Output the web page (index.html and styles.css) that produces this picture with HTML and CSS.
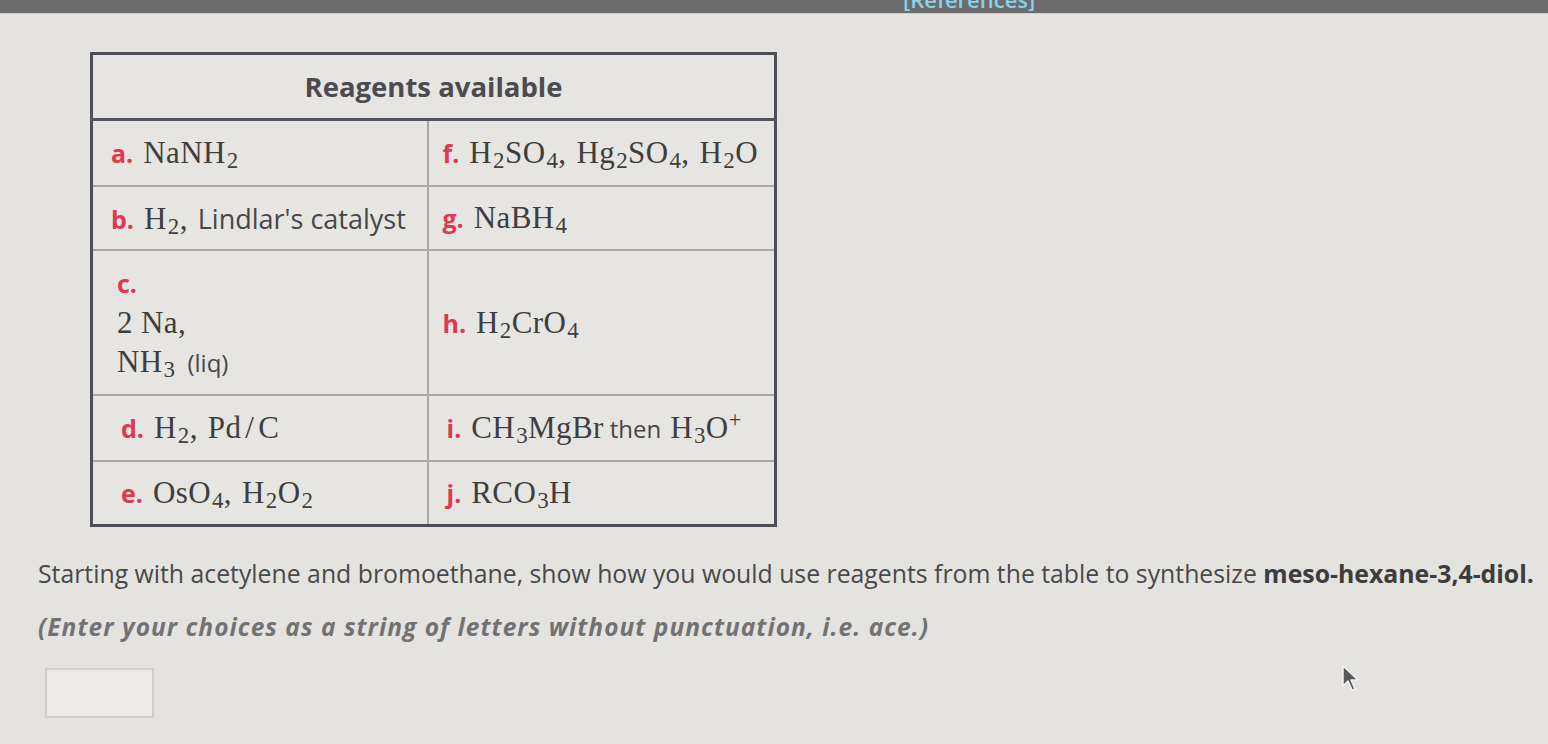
FILE: index.html
```html
<!DOCTYPE html>
<html>
<head>
<meta charset="utf-8">
<link rel="stylesheet" href="styles.css">
</head>
<body>
<div class="topbar"><span class="refs">[References]</span></div>
<main class="page">
  <table class="reagents">
    <colgroup><col class="col1"><col class="col2"></colgroup>
    <thead>
      <tr><th colspan="2">Reagents available</th></tr>
    </thead>
    <tbody>
      <tr class="r1">
        <td class="c1"><span class="lbl">a.</span><span class="chem">NaNH<sub>2</sub></span></td>
        <td class="c2"><span class="lbl">f.</span><span class="chem">H<sub>2</sub>SO<sub>4</sub><span class="cm">,</span>Hg<sub>2</sub>SO<sub>4</sub><span class="cm">,</span>H<sub>2</sub>O</span></td>
      </tr>
      <tr class="r2">
        <td class="c1"><span class="lbl">b.</span><span class="chem">H<sub>2</sub><span class="cm">,</span></span><span class="txt">Lindlar's catalyst</span></td>
        <td class="c2"><span class="lbl">g.</span><span class="chem">NaBH<sub>4</sub></span></td>
      </tr>
      <tr class="r3">
        <td class="c1 stack">
          <div class="line"><span class="lbl">c.</span></div>
          <div class="line"><span class="chem">2 Na,</span></div>
          <div class="line"><span class="chem">NH<sub>3</sub></span><span class="txt small liq">(liq)</span></div>
        </td>
        <td class="c2"><span class="lbl">h.</span><span class="chem">H<sub>2</sub>CrO<sub>4</sub></span></td>
      </tr>
      <tr class="r4">
        <td class="c1"><span class="lbl">d.</span><span class="chem">H<sub>2</sub><span class="cm">,</span>Pd<span class="sl">/</span>C</span></td>
        <td class="c2"><span class="lbl">i.</span><span class="chem">CH<sub>3</sub>MgBr</span><span class="txt small then">then</span><span class="chem">H<sub>3</sub>O<sup>+</sup></span></td>
      </tr>
      <tr class="r5">
        <td class="c1"><span class="lbl">e.</span><span class="chem">OsO<sub>4</sub><span class="cm">,</span>H<sub>2</sub>O<sub>2</sub></span></td>
        <td class="c2"><span class="lbl">j.</span><span class="chem">RCO<sub>3</sub>H</span></td>
      </tr>
    </tbody>
  </table>

  <p class="question">Starting with acetylene and bromoethane, show how you would use reagents from the table to synthesize <b>meso-hexane-3,4-diol.</b></p>
  <p class="hint">(Enter your choices as a string of letters without punctuation, i.e. ace.)</p>
  <div class="answer"></div>
</main>
<svg class="cursor" width="22" height="30" viewBox="0 0 22 30">
  <path d="M3 2 L3 22 L8 17 L12 26 L15 25 L11 16 L18 16 Z" fill="#5a5a5a" stroke="#f2f2f2" stroke-width="1.5" stroke-linejoin="round"/>
</svg>
</body>
</html>
```

FILE: styles.css
```css
html, body {
  margin: 0;
  padding: 0;
}
body {
  background: #e4e3df;
  width: 1548px;
  height: 744px;
  overflow: hidden;
  position: relative;
  font-family: "Open Sans", "Liberation Sans", sans-serif;
  color: #4a4a4a;
}
.topbar {
  height: 13px;
  background: #6d6c6c;
  overflow: hidden;
  padding-left: 903px;
  border-bottom: 1px solid #d2d1cd;
}
.refs {
  display: block;
  font-size: 22px;
  font-weight: 600;
  color: #86d3ea;
  line-height: 22px;
  margin-top: -12px;
}
.page {
  padding: 38px 0 0 38px;
}
.reagents {
  margin-left: 52px;
  width: 687px;
  table-layout: fixed;
  border-collapse: collapse;
  border: 3px solid #4f4d56;
  background: #e6e5e1;
}
.col1 { width: 336px; }
.reagents th {
  height: 63px;
  font-size: 27.5px;
  font-weight: 700;
  color: #4c4b50;
  text-align: center;
  border-bottom: 3px solid #55535c;
  padding: 0;
}
.reagents td {
  border: 2px solid #a9a8a6;
  padding: 0 0 0 18px;
  vertical-align: middle;
  white-space: nowrap;
  overflow: visible;
}
.reagents td.c2 { padding-left: 14px; }
.r1 td { height: 64px; }
.r2 td { height: 62px; }
.r3 td { height: 143px; }
.r3 td.c1 { padding-left: 24px; }
.r4 td { height: 64px; }
.r4 td.c1, .r5 td.c1 { padding-left: 28px; }
.r4 td.c2, .r5 td.c2 { padding-left: 18px; }
.r5 td { height: 62px; }
.stack .line {
  height: 39px;
  line-height: 39px;
}
.lbl {
  font-family: "Open Sans", "Liberation Sans", sans-serif;
  font-weight: 700;
  font-size: 25px;
  color: #e2374e;
  margin-right: 10px;
}
.chem {
  font-family: "Liberation Serif", "DejaVu Serif", serif;
  font-size: 31px;
  letter-spacing: 0.4px;
  color: #3e3e40;
}
.chem sub {
  font-size: 0.74em;
  vertical-align: -0.22em;
  line-height: 0;
  margin-left: 1px;
}
.chem sup {
  font-size: 0.72em;
  vertical-align: 0.5em;
  line-height: 0;
}
.cm {
  margin-right: 10px;
}
.sl {
  margin: 0 4px;
}
.txt {
  font-size: 27px;
  color: #464649;
}
.txt.small {
  font-size: 24px;
}
.liq {
  margin-left: 12px;
}
.then {
  margin: 0 9px 0 6px;
}
.question {
  margin: 30px 0 0 0;
  font-size: 24.8px;
  line-height: 32px;
  color: #49494b;
  white-space: nowrap;
}
.question b {
  font-weight: 700;
  color: #3c3c3e;
}
.hint {
  margin: 22px 0 0 0;
  font-size: 24.5px;
  line-height: 32px;
  font-style: italic;
  font-weight: 700;
  color: #727274;
  letter-spacing: 1.02px;
  white-space: nowrap;
}
.answer {
  margin: 25px 0 0 7px;
  width: 105px;
  height: 46px;
  border: 2px solid #cfceca;
  background: #ebeae6;
}
.cursor {
  position: absolute;
  left: 1340px;
  top: 664px;
}
```
